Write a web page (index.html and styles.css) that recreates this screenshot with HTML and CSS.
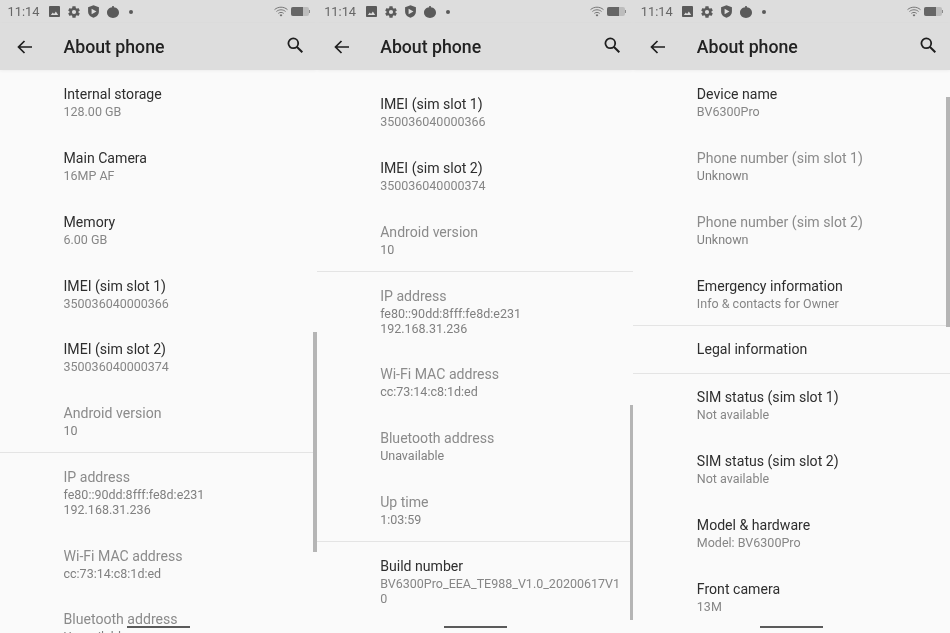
FILE: index.html
```html
<!DOCTYPE html>
<html lang="en">

<head>
	<meta charset="UTF-8">
	<title>About phone</title>
	<link rel="stylesheet" href="styles.css">
</head>

<body>
	<svg class="defs" width="0" height="0">
		<symbol id="i-image" viewBox="0 0 12 12">
			<path d="M1.2 0h9.6C11.5 0 12 .5 12 1.2v9.6c0 .7-.5 1.2-1.2 1.2H1.2C.5 12 0 11.500 0 10.800V1.200C0 .5.500 0 1.200 0zM2 9.800h8L7.500 6 5.500 8.600 4.200 7.200z" fill-rule="evenodd" />
		</symbol>
		<symbol id="i-gear" viewBox="2 2 20 20">
			<path d="M19.400 13a7.600 7.600 0 0 0 0-2l2.300-1.700-2.300-4-2.700 1.100a7.500 7.500 0 0 0-1.700-1L14.600 2.500H9.400L9 5.400a7.500 7.500 0 0 0-1.700 1L4.600 5.300l-2.300 4L4.600 11a7.600 7.600 0 0 0 0 2l-2.300 1.700 2.300 4 2.700-1.100c.5.400 1.100.7 1.700 1l.4 2.900h5.200l.4-2.900c.6-.3 1.200-.6 1.700-1l2.700 1.100 2.300-4zM12 15.500a3.500 3.500 0 1 1 0-7 3.500 3.500 0 0 1 0 7z" fill-rule="evenodd" />
		</symbol>
		<symbol id="i-shield" viewBox="2 0 20 24">
			<path d="M12 .5L2 4v8c0 5.600 4.200 10 10 11.500C17.800 22 22 17.600 22 12V4zM8.500 7l9 5-9 5z" fill-rule="evenodd" />
		</symbol>
		<symbol id="i-blob" viewBox="1 1 22 22">
			<path d="M10.500 1h3v2.200C19 3.900 23 7.800 23 13c0 5.800-4.900 10-11 10S1 18.800 1 13c0-5.200 4-9.100 9.500-9.800z" />
		</symbol>
		<symbol id="i-wifi" viewBox="0 0 26 20">
			<g fill="none" stroke="currentColor" stroke-width="1.500">
				<path d="M1 6.500C8 .5 18 .5 25 6.500" />
				<path d="M4.500 10C9.500 5.800 16.500 5.800 21.500 10" />
				<path d="M8 13.500c3-2.400 7-2.400 10 0" />
			</g>
			<path d="M10.500 16.500c1.500-1.200 3.500-1.200 5 0L13 19.500z" fill="currentColor" />
		</symbol>
		<symbol id="i-back" viewBox="0 0 16 14">
			<path d="M15 7H2M7.500 1L1.500 7l6 6" fill="none" stroke="currentColor" stroke-width="1.700" />
		</symbol>
		<symbol id="i-search" viewBox="0 0 16 16">
			<circle cx="6.300" cy="6.300" r="4.900" fill="none" stroke="currentColor" stroke-width="1.800" />
			<path d="M10 10l5.300 5.300" fill="none" stroke="currentColor" stroke-width="2" />
		</symbol>
	</svg>

	<div class="screens">

		<section class="phone">
			<div class="statusbar">
				<span class="clock">11:14</span>
				<svg class="ic ic-image"><use href="#i-image" /></svg>
				<svg class="ic ic-gear"><use href="#i-gear" /></svg>
				<svg class="ic ic-shield"><use href="#i-shield" /></svg>
				<svg class="ic ic-blob"><use href="#i-blob" /></svg>
				<span class="dot"></span>
				<svg class="ic-wifi"><use href="#i-wifi" /></svg>
				<span class="battery"><span class="level"></span></span>
			</div>
			<div class="toolbar">
				<svg class="back"><use href="#i-back" /></svg>
				<h1>About phone</h1>
				<svg class="search"><use href="#i-search" /></svg>
			</div>
			<div class="list">
				<div class="row"><div class="title">Internal storage</div><div class="sub">128.00 GB</div></div>
				<div class="row"><div class="title">Main Camera</div><div class="sub">16MP AF</div></div>
				<div class="row"><div class="title">Memory</div><div class="sub">6.00 GB</div></div>
				<div class="row"><div class="title">IMEI (sim slot 1)</div><div class="sub">350036040000366</div></div>
				<div class="row"><div class="title">IMEI (sim slot 2)</div><div class="sub">350036040000374</div></div>
				<div class="row off"><div class="title">Android version</div><div class="sub">10</div></div>
				<div class="divider"></div>
				<div class="row off"><div class="title">IP address</div><div class="sub">fe80::90dd:8fff:fe8d:e231<br>192.168.31.236</div></div>
				<div class="row off"><div class="title">Wi-Fi MAC address</div><div class="sub">cc:73:14:c8:1d:ed</div></div>
				<div class="row off"><div class="title">Bluetooth address</div><div class="sub">Unavailable</div></div>
			</div>
			<div class="scrollbar bar-a"></div>
			<div class="navpill"></div>
		</section>

		<section class="phone">
			<div class="statusbar">
				<span class="clock">11:14</span>
				<svg class="ic ic-image"><use href="#i-image" /></svg>
				<svg class="ic ic-gear"><use href="#i-gear" /></svg>
				<svg class="ic ic-shield"><use href="#i-shield" /></svg>
				<svg class="ic ic-blob"><use href="#i-blob" /></svg>
				<span class="dot"></span>
				<svg class="ic-wifi"><use href="#i-wifi" /></svg>
				<span class="battery"><span class="level"></span></span>
			</div>
			<div class="toolbar">
				<svg class="back"><use href="#i-back" /></svg>
				<h1>About phone</h1>
				<svg class="search"><use href="#i-search" /></svg>
			</div>
			<div class="list list-b">
				<div class="row"><div class="title">IMEI (sim slot 1)</div><div class="sub">350036040000366</div></div>
				<div class="row"><div class="title">IMEI (sim slot 2)</div><div class="sub">350036040000374</div></div>
				<div class="row off"><div class="title">Android version</div><div class="sub">10</div></div>
				<div class="divider"></div>
				<div class="row off"><div class="title">IP address</div><div class="sub">fe80::90dd:8fff:fe8d:e231<br>192.168.31.236</div></div>
				<div class="row off"><div class="title">Wi-Fi MAC address</div><div class="sub">cc:73:14:c8:1d:ed</div></div>
				<div class="row off"><div class="title">Bluetooth address</div><div class="sub">Unavailable</div></div>
				<div class="row off"><div class="title">Up time</div><div class="sub">1:03:59</div></div>
				<div class="divider"></div>
				<div class="row"><div class="title">Build number</div><div class="sub">BV6300Pro_EEA_TE988_V1.0_20200617V1<br>0</div></div>
			</div>
			<div class="scrollbar bar-b"></div>
			<div class="navpill"></div>
		</section>

		<section class="phone">
			<div class="statusbar">
				<span class="clock">11:14</span>
				<svg class="ic ic-image"><use href="#i-image" /></svg>
				<svg class="ic ic-gear"><use href="#i-gear" /></svg>
				<svg class="ic ic-shield"><use href="#i-shield" /></svg>
				<svg class="ic ic-blob"><use href="#i-blob" /></svg>
				<span class="dot"></span>
				<svg class="ic-wifi"><use href="#i-wifi" /></svg>
				<span class="battery"><span class="level"></span></span>
			</div>
			<div class="toolbar">
				<svg class="back"><use href="#i-back" /></svg>
				<h1>About phone</h1>
				<svg class="search"><use href="#i-search" /></svg>
			</div>
			<div class="list">
				<div class="row"><div class="title">Device name</div><div class="sub">BV6300Pro</div></div>
				<div class="row off"><div class="title">Phone number (sim slot 1)</div><div class="sub">Unknown</div></div>
				<div class="row off"><div class="title">Phone number (sim slot 2)</div><div class="sub">Unknown</div></div>
				<div class="row"><div class="title">Emergency information</div><div class="sub">Info &amp; contacts for Owner</div></div>
				<div class="divider"></div>
				<div class="row single"><div class="title">Legal information</div></div>
				<div class="divider"></div>
				<div class="row"><div class="title">SIM status (sim slot 1)</div><div class="sub">Not available</div></div>
				<div class="row"><div class="title">SIM status (sim slot 2)</div><div class="sub">Not available</div></div>
				<div class="row"><div class="title">Model &amp; hardware</div><div class="sub">Model: BV6300Pro</div></div>
				<div class="row"><div class="title">Front camera</div><div class="sub">13M</div></div>
			</div>
			<div class="scrollbar bar-c"></div>
			<div class="navpill"></div>
		</section>

	</div>
</body>

</html>
```

FILE: styles.css
```css
* {
	margin: 0;
	padding: 0;
	box-sizing: border-box;
	font-family: "Roboto", sans-serif;
}

html, body {
	height: 100%;
	overflow: hidden;
	background: #fafafa;
}

.defs {
	display: block;
	height: 0;
}

/* the reference is a soft video frame */
.screens {
	display: grid;
	grid-template-columns: repeat(3, 1fr);
	height: 633px;
	filter: blur(0.35px);
}

.phone {
	position: relative;
	height: 633px;
	overflow: hidden;
	background: #fafafa;
}

/* status bar */
.statusbar {
	display: flex;
	align-items: center;
	height: 23px;
	padding-left: 7.500px;
	background: #dddddd;
	color: #5f5f5f;
}

.clock {
	font-size: 12.800px;
	width: 41.500px;
	color: #666;
}

.ic {
	fill: #5a5a5a;
	flex: none;
}

.ic-image {
	width: 11px;
	height: 11px;
	margin-right: 8px;
}

.ic-gear {
	width: 12px;
	height: 12px;
	margin-right: 8px;
}

.ic-shield {
	width: 11px;
	height: 13px;
	margin-right: 8px;
}

.ic-blob {
	width: 12px;
	height: 12px;
	margin-right: 10px;
}

.dot {
	width: 4px;
	height: 4px;
	border-radius: 50%;
	background: #5a5a5a;
}

.ic-wifi {
	width: 14px;
	height: 11px;
	margin-left: auto;
	margin-right: 3px;
	color: #5f5f5f;
}

.battery {
	position: relative;
	display: block;
	width: 18px;
	height: 9px;
	margin-right: 8px;
	border-radius: 2px;
	background: #bdbdbd;
}

.battery::after {
	content: '';
	position: absolute;
	right: -1px;
	top: 3px;
	width: 1px;
	height: 3px;
	background: #8a8a8a;
}

.level {
	display: block;
	width: 12px;
	height: 9px;
	border-radius: 2px 0 0 2px;
	background: #666;
}

/* toolbar */
.toolbar {
	display: flex;
	align-items: center;
	height: 47px;
	background: #dddddd;
	box-shadow: 0 1px 3px rgba(0, 0, 0, 0.05);
	position: relative;
}

.back {
	width: 16px;
	height: 14px;
	margin-left: 17px;
	color: #1e1e1e;
	flex: none;
}

h1 {
	margin-left: 30.500px;
	font-size: 17.700px;
	font-weight: 500;
	color: #222;
}

.search {
	width: 16px;
	height: 16px;
	margin-left: auto;
	margin-right: 13.500px;
	margin-top: -3px;
	color: #1e1e1e;
	flex: none;
}

/* settings rows */
.list-b {
	padding-top: 10px;
}

.row {
	padding: 14.250px 16px 14.500px 63.500px;
}

.row.single {
	padding-bottom: 13.750px;
}

.title {
	font-size: 14.100px;
	line-height: 20px;
	color: #2e2e2e;
}

.sub {
	font-size: 12.500px;
	line-height: 15px;
	color: #868686;
}

.off .title {
	color: #8b8b8b;
}

.off .sub {
	color: #808080;
}

.divider {
	height: 1px;
	margin: -0.500px 0;
	position: relative;
	background: #e4e4e4;
}

/* things lying over the list */
.scrollbar {
	position: absolute;
	right: 0;
	width: 3.500px;
	background: #b5b5b5;
}

.bar-a {
	top: 332px;
	height: 220px;
}

.bar-b {
	top: 405px;
	height: 215px;
}

.bar-c {
	top: 97px;
	height: 230px;
}

.navpill {
	position: absolute;
	left: 127px;
	bottom: 5px;
	width: 63px;
	height: 2px;
	background: #5a5a5a;
}
```
